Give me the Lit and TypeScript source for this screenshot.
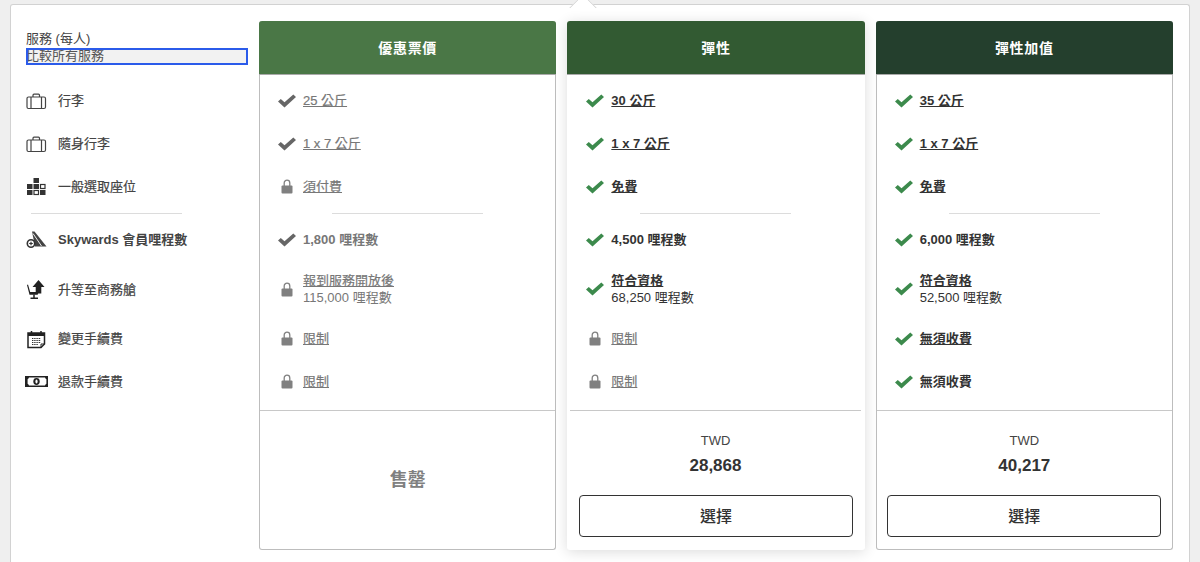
import { LitElement, html, css, svg } from "lit";
import { customElement } from "lit/decorators.js";

type Cell = { k: "check" | "lock"; t: string; u?: boolean; b?: boolean; sub?: string };

const suitcase = svg`<path d="M2.500 6h15.500a1.500 1.500 0 0 1 1.500 1.500v8.500a1.500 1.500 0 0 1-1.500 1.500H2.500A1.500 1.500 0 0 1 1 16V7.500A1.500 1.500 0 0 1 2.500 6zM5 6v11.500M15.500 6v11.500M7 6V4.200a1 1 0 0 1 1-1h4.500a1 1 0 0 1 1 1V6" fill="none" stroke="#444" stroke-width="1.200"/>`;
const seats = svg`<g fill="#333"><rect x="7.500" y="1" width="5.500" height="5"/><rect x="1" y="7" width="5.500" height="5"/><rect x="7.500" y="7" width="5.500" height="5"/><rect x="14.500" y="7.500" width="4.500" height="4" fill="none" stroke="#333" stroke-width="1.200"/><rect x="1" y="13" width="5.500" height="5"/><rect x="8" y="13.500" width="4.500" height="4" fill="none" stroke="#333" stroke-width="1.200"/><rect x="14" y="13" width="5.500" height="5"/></g>`;
const sky = svg`<path d="M6 1.500h2.500L20.500 16.500H9z" fill="#444"/><path d="M7 3.500 15.500 16" stroke="#fff" stroke-width=".9"/><circle cx="5" cy="13.500" r="3.700" fill="#fff" stroke="#333" stroke-width="1.600"/><path d="M3.200 13.500h3.600M5 11.700v3.600" stroke="#333" stroke-width="1.200"/>`;
const upgrade = svg`<path d="M12.500 1l6 7h-3.200v6.500h-5.600V8H6.500z" fill="#222"/><path d="M2 5.500 4.200 13h8.300l-.8 2.800H3.500L1 6z" fill="#222"/><path d="M8 15.500v3M4.500 19.300h7.500" stroke="#222" stroke-width="1.500"/>`;
const calendar = svg`<path d="M2 4h16.500v11l-3.500 3.500H2z" fill="#fff" stroke="#222" stroke-width="1.500"/><path d="M2 4h16.500v3H2z" fill="#222"/><path d="M5.500 2v3.500M15 2v3.500" stroke="#222" stroke-width="1.500"/><path d="M6 9.500h9M6 11.500h9M6 13.500h9M6 15.500h6" stroke="#333" stroke-width="1.200" stroke-dasharray="1.400 .8"/><path d="M15 18.500v-3.500h3.500" fill="none" stroke="#222"/>`;
const money = svg`<path d="M-1 4h23v11H-1z" fill="#222"/><path d="M3 5.600h16a2.400 2.400 0 0 0 1.400 1.600v4.600A2.400 2.400 0 0 0 19 13.400H3a2.400 2.400 0 0 0-1.400-1.600V7.200A2.400 2.400 0 0 0 3 5.600z" fill="#fff"/><ellipse cx="10.500" cy="9.500" rx="3.200" ry="3.400" fill="#222"/><ellipse cx="10.500" cy="9.500" rx="1.100" ry="2" fill="#fff"/>`;

const labels: { t: string; i: unknown; w: number; b?: boolean; tall?: boolean }[] = [
  { t: "行李", i: suitcase, w: 21 },
  { t: "隨身行李", i: suitcase, w: 21 },
  { t: "一般選取座位", i: seats, w: 20 },
];
const labels2: { t: string; i: unknown; w: number; b?: boolean; tall?: boolean }[] = [
  { t: "Skywards 會員哩程數", i: sky, w: 21, b: true },
  { t: "升等至商務艙", i: upgrade, w: 21, tall: true },
  { t: "變更手續費", i: calendar, w: 21 },
  { t: "退款手續費", i: money, w: 22 },
];

const plans = [
  {
    name: "優惠票價", tone: "t1", muted: true,
    top: [
      { k: "check", t: "25 公斤", u: true },
      { k: "check", t: "1 x 7 公斤", u: true },
      { k: "lock", t: "須付費", u: true },
    ] as Cell[],
    bottom: [
      { k: "check", t: "1,800 哩程數", b: true },
      { k: "lock", t: "報到服務開放後", u: true, sub: "115,000 哩程數" },
      { k: "lock", t: "限制", u: true },
      { k: "lock", t: "限制", u: true },
    ] as Cell[],
    price: "",
  },
  {
    name: "彈性", tone: "t2", muted: false, raised: true,
    top: [
      { k: "check", t: "30 公斤", u: true, b: true },
      { k: "check", t: "1 x 7 公斤", u: true, b: true },
      { k: "check", t: "免費", u: true, b: true },
    ] as Cell[],
    bottom: [
      { k: "check", t: "4,500 哩程數", b: true },
      { k: "check", t: "符合資格", u: true, b: true, sub: "68,250 哩程數" },
      { k: "lock", t: "限制", u: true },
      { k: "lock", t: "限制", u: true },
    ] as Cell[],
    price: "28,868",
  },
  {
    name: "彈性加值", tone: "t3", muted: false,
    top: [
      { k: "check", t: "35 公斤", u: true, b: true },
      { k: "check", t: "1 x 7 公斤", u: true, b: true },
      { k: "check", t: "免費", u: true, b: true },
    ] as Cell[],
    bottom: [
      { k: "check", t: "6,000 哩程數", b: true },
      { k: "check", t: "符合資格", u: true, b: true, sub: "52,500 哩程數" },
      { k: "check", t: "無須收費", u: true, b: true },
      { k: "check", t: "無須收費", b: true },
    ] as Cell[],
    price: "40,217",
  },
];

@customElement("app-root")
export class AppRoot extends LitElement {
  static styles = css`
    :host {
      display: block;
      height: 562px;
      overflow: hidden;
      background: #efefef;
      font-family: "Liberation Sans", "Noto Sans CJK TC", sans-serif;
      color: #333;
    }
    .card {
      position: relative;
      box-sizing: border-box;
      height: 558px;
      margin: 4px 10px 0 10px;
      padding: 16px 16px 0 15px;
      background: #fff;
      border: 1px solid #d2d2d2;
      border-bottom: 0;
      border-radius: 3px 3px 0 0;
      display: grid;
      grid-template-columns: 222px repeat(3, 1fr);
      column-gap: 11px;
      align-items: start;
    }
    .notch {
      position: absolute;
      left: 562px;
      top: -7px;
      width: 20px;
      height: 20px;
      background: #fff;
      transform: rotate(45deg);
      border: 1px solid #d2d2d2;
      box-sizing: border-box;
      clip-path: polygon(0 0, 100% 0, 0 100%);
    }
    .side-head {
      height: 53px;
      padding-top: 9px;
      box-sizing: border-box;
      font-size: 13px;
      line-height: 17px;
      color: #444;
    }
    .compare {
      display: block;
      height: 17px;
      box-sizing: border-box;
      margin-top: 1px;
      background: #f2f2f2;
      outline: 2px solid #2b5bea;
      outline-offset: -2px;
      line-height: 16px;
      color: #555;
    }
    .rows {
      padding-top: 5px;
    }
    .row {
      height: 43px;
      display: flex;
      align-items: center;
      box-sizing: border-box;
      line-height: 17px;
    }
    .row.tall {
      height: 56px;
    }
    .sep {
      height: 10px;
      display: flex;
      align-items: center;
      justify-content: center;
    }
    .sep i {
      display: block;
      width: 151px;
      height: 1px;
      background: #dcdcdc;
    }
    .side .sep {
      justify-content: flex-start;
      padding-left: 5px;
    }
    .side .row {
      font-size: 13px;
      color: #444;
      -webkit-text-stroke: 0.2px #444;
    }
    .side .row b {
      font-weight: 700;
      color: #444;
      -webkit-text-stroke: 0;
    }
    .side .ico {
      width: 32px;
      flex: none;
      display: flex;
      align-items: center;
    }
    .side .ico svg {
      overflow: visible;
    }
    .col {
      box-sizing: border-box;
      height: 529px;
      border: 1px solid #bdbdbd;
      border-top: 0;
      border-radius: 3px;
      background: #fff;
      display: flex;
      flex-direction: column;
    }
    .col.raised {
      border-color: transparent;
      box-shadow: 0 2px 14px rgba(0, 0, 0, 0.14);
    }
    .head {
      margin: 0 -1px;
      height: 54px;
      box-sizing: border-box;
      padding-bottom: 2px;
      border-bottom: 1px solid #a9a9a9;
      border-radius: 3px 3px 0 0;
      display: flex;
      align-items: center;
      justify-content: center;
      color: #fff;
      font-size: 14px;
      font-weight: 700;
      letter-spacing: 0.7px;
    }
    .t1 { background: #4a7746; }
    .t2 { background: #325a32; }
    .t3 { background: #243f2d; }
    .col .rows {
      padding-top: 4px;
    }
    .cell {
      padding-left: 18px;
      font-size: 13px;
      color: #333;
      gap: 7px;
    }
    .mark {
      width: 18px;
      flex: none;
      display: flex;
      justify-content: center;
    }
    .txt {
      line-height: 17px;
    }
    .txt.u span.m {
      text-decoration: underline;
    }
    .txt.b span.m {
      font-weight: 700;
    }
    .muted .txt:not(.b) span.m {
      -webkit-text-stroke: 0.2px #777;
    }
    .txt .s {
      display: block;
    }
    .muted {
      color: #777;
    }
    .foot {
      flex: 1;
      margin-top: 7px;
      border-top: 1px solid #c8c8c8;
      display: flex;
      flex-direction: column;
      align-items: center;
      padding-top: 22px;
      box-sizing: border-box;
    }
    .raised .foot {
      margin-left: 2px;
      margin-right: 3px;
    }
    .raised .btn {
      margin-left: 1px;
    }
    .soldout {
      flex: 1;
      display: flex;
      align-items: center;
      justify-content: center;
      color: #808080;
      font-size: 18px;
      font-weight: 700;
      padding-bottom: 26px;
    }
    .cur {
      font-size: 13px;
      line-height: 16px;
      color: #444;
    }
    .price {
      margin-top: 7px;
      font-size: 17px;
      font-weight: 700;
      line-height: 20px;
      color: #333;
    }
    .btn {
      box-sizing: border-box;
      margin-top: 19px;
      width: 274px;
      height: 42px;
      padding: 0 0 2px;
      border: 1px solid #333;
      border-radius: 4px;
      background: #fff;
      font: inherit;
      font-size: 16px;
      font-weight: 500;
      color: #333;
    }
  `;

  private sideRow(l: (typeof labels)[number]) {
    return html`<div class="row ${l.tall ? "tall" : ""}">
      <span class="ico"><svg width="${l.w}" height="20" viewBox="0 0 ${l.w} 20">${l.i}</svg></span>
      ${l.b ? html`<b>${l.t}</b>` : l.t}
    </div>`;
  }

  private mark(k: string, muted: boolean) {
    if (k === "lock") {
      return html`<span class="mark"><svg width="12" height="15" viewBox="0 0 12 15">
        <path d="M3.200 7V4a2.800 2.800 0 0 1 5.600 0v3" fill="none" stroke="#808080" stroke-width="1.300"/>
        <rect x="0.500" y="6.500" width="11" height="8" rx="1" fill="#808080"/></svg></span>`;
    }
    const c = muted ? "#666" : "#3c8a4c";
    return html`<span class="mark"><svg width="18" height="14" viewBox="0 0 18 14">
      <path d="M0 7.500 2.800 5 6.500 8.300 15.300 .5 18 3 6.500 13.500z" fill="${c}"/></svg></span>`;
  }

  private cell(c: Cell, muted: boolean) {
    const grey = muted || c.k === "lock";
    return html`<div class="row cell ${c.sub ? "tall" : ""} ${grey ? "muted" : ""}">
      ${this.mark(c.k, muted)}
      <span class="txt ${c.u ? "u" : ""} ${c.b ? "b" : ""}">
        <span class="m">${c.t}</span>
        ${c.sub ? html`<span class="s">${c.sub}</span>` : ""}
      </span>
    </div>`;
  }

  render() {
    return html`<div class="card">
      <span class="notch"></span>
      <div class="side">
        <div class="side-head">服務 (每人)<span class="compare">比較所有服務</span></div>
        <div class="rows">
          ${labels.map((l) => this.sideRow(l))}
          <div class="sep"><i></i></div>
          ${labels2.map((l) => this.sideRow(l))}
        </div>
      </div>
      ${plans.map(
        (p) => html`<div class="col ${(p as { raised?: boolean }).raised ? "raised" : ""}">
          <div class="head ${p.tone}">${p.name}</div>
          <div class="rows">
            ${p.top.map((c) => this.cell(c, p.muted))}
            <div class="sep"><i></i></div>
            ${p.bottom.map((c) => this.cell(c, p.muted))}
          </div>
          <div class="foot">
            ${p.price
              ? html`<div class="cur">TWD</div>
                  <div class="price">${p.price}</div>
                  <button class="btn">選擇</button>`
              : html`<div class="soldout">售罄</div>`}
          </div>
        </div>`
      )}
    </div>`;
  }
}
